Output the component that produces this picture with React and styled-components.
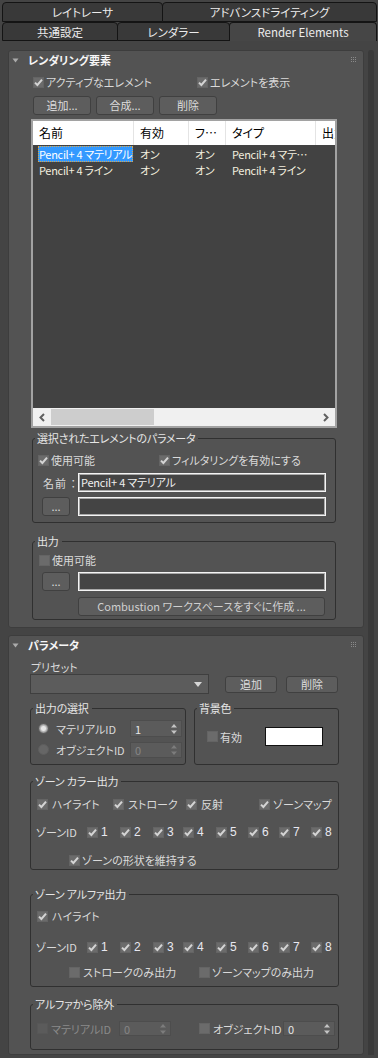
import React from 'react';
import styled, { createGlobalStyle } from 'styled-components';

const GlobalStyle = createGlobalStyle`
  * { box-sizing: border-box; }
  html, body { margin: 0; padding: 0; background: #444444; }
  body {
    font-family: "Noto Sans CJK JP", "Liberation Sans", sans-serif;
    font-size: 11px;
    line-height: 14px;
    color: #dadada;
    font-feature-settings: "palt";
  }
`;

/* ---------- tabs ---------- */

const TabBar = styled.div`
  height: 41px;
  padding-top: 2px;
`;

const TabRow = styled.div`
  display: flex;
  height: ${p => p.$h}px;
  padding-left: 2px;
`;

const Tab = styled.div`
  width: ${p => p.$w}px;
  flex: none;
  display: flex;
  align-items: center;
  justify-content: center;
  margin-right: -1px;
  background: ${p => (p.$active ? '#464646' : '#393939')};
  border: 1px solid #141414;
  border-bottom: ${p => (p.$active ? 'none' : '1px solid #141414')};
  border-radius: 4px 4px 0 0;
  color: #ececec;
  font-size: 11.5px;
  position: relative;
  z-index: ${p => (p.$active ? 1 : 0)};
`;

/* ---------- layout ---------- */

const Main = styled.div`
  display: flex;
  gap: 4px;
  padding: 9px 0 0 8px;
`;

const Column = styled.div`
  width: 356px;
  display: flex;
  flex-direction: column;
  gap: 7px;
`;

const ScrollTrack = styled.div`
  width: 6px;
  background: #3a3a3a;
  border-radius: 3px 3px 0 0;
`;

const Rollout = styled.section`
  background: #535353;
  border: 1px solid #3d3d3d;
  border-radius: 3px;
  padding: 0 0 ${p => p.$pb}px ${p => p.$pl}px;
`;

const RolloutHeader = styled.div`
  height: 18px;
  display: flex;
  align-items: center;
  margin-left: -${p => p.$pl}px;
  padding: 0 6px 0 3px;
  color: #f6f6f6;
  font-weight: bold;
`;

const HeaderTitle = styled.span`
  flex: 1;
  margin-left: 9px;
`;

const Row = styled.div`
  display: flex;
  align-items: center;
  height: ${p => p.$h || 14}px;
  margin-top: ${p => p.$mt || 0}px;
  padding-left: ${p => p.$pl || 0}px;
  gap: ${p => p.$gap || 0}px;
`;

const Slot = styled.div`
  width: ${p => p.$w}px;
  flex: none;
  display: flex;
  align-items: center;
  padding-left: ${p => p.$pl || 0}px;
`;

const Group = styled.fieldset`
  margin: ${p => p.$mt || 0}px 0 0 ${p => p.$ml || 0}px;
  padding: 0 0 ${p => p.$pb || 0}px 0;
  width: ${p => p.$w}px;
  min-width: 0;
  border: 1px solid #303030;
  border-radius: 3px;
`;

const Legend = styled.legend`
  margin-left: 2px;
  padding: 0 3px 0 2px;
  height: 14px;
  line-height: 14px;
  color: #e6e6e6;
  letter-spacing: -0.2px;
`;

const GroupRow = styled.div`
  display: flex;
  gap: 8px;
  margin-top: ${p => p.$mt}px;
`;

/* ---------- controls ---------- */

const Button = styled.button`
  width: ${p => p.$w}px;
  height: ${p => p.$h || 19}px;
  margin-left: ${p => p.$ml || 0}px;
  flex: none;
  padding: 0;
  background: #5d5d5d;
  border: 1px solid #404040;
  border-radius: 3px;
  color: #dcdcdc;
  font: inherit;
  line-height: 1;
`;

const TextField = styled.div`
  width: ${p => p.$w}px;
  height: 19px;
  flex: none;
  background: #444444;
  border: 1px solid #f4f4f4;
  box-shadow: inset 0 0 0 1px #a8a8a8;
  padding-left: 2px;
  line-height: 17px;
  color: #f0f0f0;
  white-space: nowrap;
  letter-spacing: -0.2px;
`;

const FieldLabel = styled.span`
  letter-spacing: 1px;
  color: #dadada;
`;

const CheckLabel = styled.label`
  display: inline-flex;
  align-items: center;
  gap: ${p => p.$gap ?? 2}px;
  white-space: nowrap;
  color: ${p => (p.$disabled ? '#8a8a8a' : '#dadada')};
`;

const Box = styled.span`
  width: 11px;
  height: 11px;
  flex: none;
  display: flex;
  align-items: center;
  justify-content: center;
  background: ${p => (p.$disabled ? '#5b5b5b' : '#6b6b6b')};
  border: 1px solid ${p => (p.$disabled ? '#575757' : '#646464')};
`;

const RadioDot = styled.span`
  width: 11px;
  height: 11px;
  flex: none;
  border-radius: 50%;
  background: ${p =>
    p.$on
      ? 'radial-gradient(circle, #e6e6e6 0 2px, #bcbcbc 3px, #7a7a7a 5px)'
      : '#666666'};
  border: 1px solid #5e5e5e;
`;

const RadioLabel = styled.label`
  display: inline-flex;
  align-items: center;
  gap: 7px;
  white-space: nowrap;
`;

const Spinner = styled.div`
  width: ${p => p.$w}px;
  height: ${p => p.$h}px;
  flex: none;
  display: flex;
  align-items: center;
  justify-content: space-between;
  padding: 0 4px 0 4px;
  background: #5b5b5b;
  border: 1px solid #4d4d4d;
  color: ${p => (p.$disabled ? '#868686' : '#e6e6e6')};
`;

const Dropdown = styled.div`
  width: 179px;
  height: 20px;
  flex: none;
  display: flex;
  align-items: center;
  justify-content: flex-end;
  padding-right: 6px;
  background: #5c5c5c;
  border: 1px solid #3f3f3f;
`;

const Swatch = styled.div`
  width: 58px;
  height: 19px;
  background: #ffffff;
  border: 1px solid #111111;
`;

const Digit = styled.span`
  font-family: "Liberation Sans", sans-serif;
  font-size: 12px;
  color: #e8e8f0;
`;

const Combo = styled(Button)`
  color: #cfcfcf;
  font-size: 11px;
`;

/* ---------- list ---------- */

const List = styled.div`
  margin-top: 4px;
  width: 306px;
  height: 309px;
  border: 2px solid #a2a2a2;
  background: #424242;
  display: flex;
  flex-direction: column;
`;

const ListHead = styled.div`
  display: flex;
  height: 24px;
  background: #ffffff;
  overflow: hidden;
`;

const HeadCell = styled.div`
  width: ${p => p.$w}px;
  flex: none;
  display: flex;
  align-items: center;
  padding-left: 6px;
  border-right: 1px solid #e4e4e4;
  color: #000000;
  font-size: 12px;
  white-space: nowrap;
  overflow: hidden;
`;

const ListBody = styled.div`
  flex: 1;
  padding-top: 1px;
`;

const ListRow = styled.div`
  display: flex;
  height: 16px;
`;

const Cell = styled.div`
  width: ${p => p.$w}px;
  flex: none;
  padding-left: ${p => (p.$selected ? 5 : 6)}px;
  line-height: 16px;
  color: #f2eedf;
  white-space: nowrap;
  overflow: hidden;
  letter-spacing: -0.3px;
`;

const Selected = styled.span`
  display: block;
  padding-left: 1px;
  margin-right: 1px;
  background: #3399ff;
  color: #ffffff;
  outline: 1px dotted #e0a848;
  outline-offset: -1px;
`;

const HScroll = styled.div`
  height: 18px;
  display: flex;
  align-items: center;
  background: #f0f0f0;
`;

const ScrollButton = styled.div`
  width: 18px;
  height: 18px;
  flex: none;
  display: flex;
  align-items: center;
  justify-content: center;
`;

const Thumb = styled.div`
  width: 103px;
  height: 16px;
  background: #cdcdcd;
`;

const Spacer = styled.div`
  flex: 1;
`;

/* ---------- icons ---------- */

const CheckMark = () => (
  <svg width="9" height="9" viewBox="0 0 9 9">
    <path d="M1 4.6 L3.4 7 L8 1.6" fill="none" stroke="#d4d4d4" strokeWidth="2" />
  </svg>
);

const Collapse = () => (
  <svg width="7" height="5" viewBox="0 0 7 5">
    <polygon points="0.5,0.5 6.5,0.5 3.5,4.5" fill="#ababab" />
  </svg>
);

const Grip = () => (
  <svg width="6" height="6" viewBox="0 0 6 6" fill="#8a8a8a">
    {[0, 2, 4].map(y =>
      [0, 2, 4].map(x => <rect key={`${x}-${y}`} x={x} y={y} width="1" height="1" />)
    )}
  </svg>
);

const DropArrow = () => (
  <svg width="8" height="5" viewBox="0 0 8 5">
    <polygon points="0,0 8,0 4,5" fill="#d6d6d6" />
  </svg>
);

const SpinArrows = ({ disabled }) => (
  <svg width="6" height="10" viewBox="0 0 6 10" fill={disabled ? '#7c7c7c' : '#c4c4c4'}>
    <polygon points="3,0 6,3.5 0,3.5" />
    <polygon points="0,6.5 6,6.5 3,10" />
  </svg>
);

const Chevron = ({ right }) => (
  <svg width="6" height="9" viewBox="0 0 6 9">
    <path
      d={right ? 'M1 1 L4.5 4.5 L1 8' : 'M5 1 L1.5 4.5 L5 8'}
      fill="none"
      stroke="#606060"
      strokeWidth="2"
    />
  </svg>
);

/* ---------- small composites ---------- */

const Check = ({ checked, disabled, gap, children }) => (
  <CheckLabel $disabled={disabled} $gap={gap}>
    <Box $disabled={disabled}>{checked && <CheckMark />}</Box>
    {children}
  </CheckLabel>
);

const Radio = ({ on, children }) => (
  <RadioLabel>
    <RadioDot $on={on} />
    {children}
  </RadioLabel>
);

const NumberSpinner = ({ value, w, h, disabled }) => (
  <Spinner $w={w} $h={h} $disabled={disabled}>
    <span>{value}</span>
    <SpinArrows disabled={disabled} />
  </Spinner>
);

const zoneSlots = [33, 33, 30, 33, 32, 31, 32, 24];

const ZoneIdRow = ({ mt }) => (
  <Row $mt={mt} $pl={5}>
    <Slot $w={51}>ゾーンID</Slot>
    {zoneSlots.map((w, i) => (
      <Slot key={i} $w={w}>
        <Check checked gap={3}>
          <Digit>{i + 1}</Digit>
        </Check>
      </Slot>
    ))}
  </Row>
);

const columns = [
  { label: '名前', w: 101 },
  { label: '有効', w: 55 },
  { label: 'フ…', w: 37 },
  { label: 'タイプ', w: 90 },
  { label: '出力', w: 40 },
];

const elements = [
  { name: 'Pencil+ 4 マテリアル', type: 'Pencil+ 4 マテ…', selected: true },
  { name: 'Pencil+ 4 ライン', type: 'Pencil+ 4 ライン' },
];

const RolloutTitle = ({ pl, children }) => (
  <RolloutHeader $pl={pl}>
    <Collapse />
    <HeaderTitle>{children}</HeaderTitle>
    <Grip />
  </RolloutHeader>
);

export default function App() {
  return (
    <>
      <GlobalStyle />
      <TabBar>
        <TabRow $h={20}>
          <Tab $w={161}>レイトレーサ</Tab>
          <Tab $w={215}>アドバンスドライティング</Tab>
        </TabRow>
        <TabRow $h={19}>
          <Tab $w={116}>共通設定</Tab>
          <Tab $w={113}>レンダラー</Tab>
          <Tab $w={148} $active>
            Render Elements
          </Tab>
        </TabRow>
      </TabBar>

      <Main>
        <Column>
          <Rollout $pl={22} $pb={7}>
            <RolloutTitle pl={22}>レンダリング要素</RolloutTitle>

            <Row $mt={6} $pl={2}>
              <Slot $w={164}>
                <Check checked>アクティブなエレメント</Check>
              </Slot>
              <Check checked>エレメントを表示</Check>
            </Row>

            <Row $mt={7} $h={19} $pl={2} $gap={5}>
              <Button $w={58}>追加...</Button>
              <Button $w={58}>合成...</Button>
              <Button $w={58}>削除</Button>
            </Row>

            <List>
              <ListHead>
                {columns.map(c => (
                  <HeadCell key={c.label} $w={c.w}>
                    {c.label}
                  </HeadCell>
                ))}
              </ListHead>
              <ListBody>
                {elements.map(el => (
                  <ListRow key={el.name}>
                    <Cell $w={101} $selected={el.selected}>
                      {el.selected ? <Selected>{el.name}</Selected> : el.name}
                    </Cell>
                    <Cell $w={55}>オン</Cell>
                    <Cell $w={37}>オン</Cell>
                    <Cell $w={90}>{el.type}</Cell>
                  </ListRow>
                ))}
              </ListBody>
              <HScroll>
                <ScrollButton>
                  <Chevron />
                </ScrollButton>
                <Thumb />
                <Spacer />
                <ScrollButton>
                  <Chevron right />
                </ScrollButton>
              </HScroll>
            </List>

            <Group $mt={3} $ml={1} $w={304} $pb={6}>
              <Legend>選択されたエレメントのパラメータ</Legend>
              <Row $mt={8} $pl={5}>
                <Slot $w={121}>
                  <Check checked>使用可能</Check>
                </Slot>
                <Check checked>フィルタリングを有効にする</Check>
              </Row>
              <Row $mt={6} $h={19}>
                <Slot $w={45} $pl={10}>
                  <FieldLabel>名前 ：</FieldLabel>
                </Slot>
                <TextField $w={248}>Pencil+ 4 マテリアル</TextField>
              </Row>
              <Row $mt={5} $h={19} $pl={9} $gap={8}>
                <Button $w={28}>...</Button>
                <TextField $w={248} />
              </Row>
            </Group>

            <Group $mt={11} $ml={1} $w={304} $pb={3}>
              <Legend>出力</Legend>
              <Row $mt={5} $pl={6}>
                <Check>使用可能</Check>
              </Row>
              <Row $mt={5} $h={19} $pl={9} $gap={8}>
                <Button $w={28}>...</Button>
                <TextField $w={248} />
              </Row>
              <Row $mt={6} $h={19} $pl={45}>
                <Combo $w={247}>Combustion ワークスペースをすぐに作成 ...</Combo>
              </Row>
            </Group>
          </Rollout>

          <Rollout $pl={21} $pb={4}>
            <RolloutTitle pl={21}>パラメータ</RolloutTitle>

            <Row $mt={6} $pl={1}>
              プリセット
            </Row>
            <Row $h={20}>
              <Dropdown>
                <DropArrow />
              </Dropdown>
              <Button $w={52} $h={17} $ml={16}>
                追加
              </Button>
              <Button $w={52} $h={17} $ml={9}>
                削除
              </Button>
            </Row>

            <GroupRow $mt={7}>
              <Group $w={156} $pb={6}>
                <Legend>出力の選択</Legend>
                <Row $mt={5} $h={17} $pl={7}>
                  <Slot $w={92}>
                    <Radio on>マテリアルID</Radio>
                  </Slot>
                  <NumberSpinner value="1" w={52} h={17} />
                </Row>
                <Row $mt={4} $h={17} $pl={7}>
                  <Slot $w={92}>
                    <Radio>オブジェクトID</Radio>
                  </Slot>
                  <NumberSpinner value="0" w={52} h={16} disabled />
                </Row>
              </Group>
              <Group $w={145}>
                <Legend>背景色</Legend>
                <Row $mt={12} $h={19} $pl={12}>
                  <Slot $w={58}>
                    <Check>有効</Check>
                  </Slot>
                  <Swatch />
                </Row>
              </Group>
            </GroupRow>

            <Group $mt={9} $w={309} $pb={2}>
              <Legend>ゾーン カラー出力</Legend>
              <Row $mt={9} $pl={6}>
                <Slot $w={76}>
                  <Check checked gap={4}>ハイライト</Check>
                </Slot>
                <Slot $w={73}>
                  <Check checked gap={4}>ストローク</Check>
                </Slot>
                <Slot $w={73}>
                  <Check checked gap={4}>反射</Check>
                </Slot>
                <Check checked gap={3}>ゾーンマップ</Check>
              </Row>
              <ZoneIdRow mt={14} />
              <Row $mt={14} $pl={38}>
                <Check checked>ゾーンの形状を維持する</Check>
              </Row>
            </Group>

            <Group $mt={17} $w={309} $pb={7}>
              <Legend>ゾーン アルファ出力</Legend>
              <Row $mt={8} $pl={6}>
                <Check checked gap={4}>ハイライト</Check>
              </Row>
              <ZoneIdRow mt={17} />
              <Row $mt={11} $pl={38}>
                <Slot $w={130}>
                  <Check gap={3}>ストロークのみ出力</Check>
                </Slot>
                <Check gap={2}>ゾーンマップのみ出力</Check>
              </Row>
            </Group>

            <Group $mt={10} $w={309} $pb={13}>
              <Legend>アルファから除外</Legend>
              <Row $mt={10} $h={15} $pl={6}>
                <Slot $w={82}>
                  <Check disabled gap={3}>マテリアルID</Check>
                </Slot>
                <NumberSpinner value="0" w={52} h={15} disabled />
                <Slot $w={112} $pl={28}>
                  <Check gap={3}>オブジェクトID</Check>
                </Slot>
                <NumberSpinner value="0" w={52} h={15} />
              </Row>
            </Group>
          </Rollout>
        </Column>
        <ScrollTrack />
      </Main>
    </>
  );
}
